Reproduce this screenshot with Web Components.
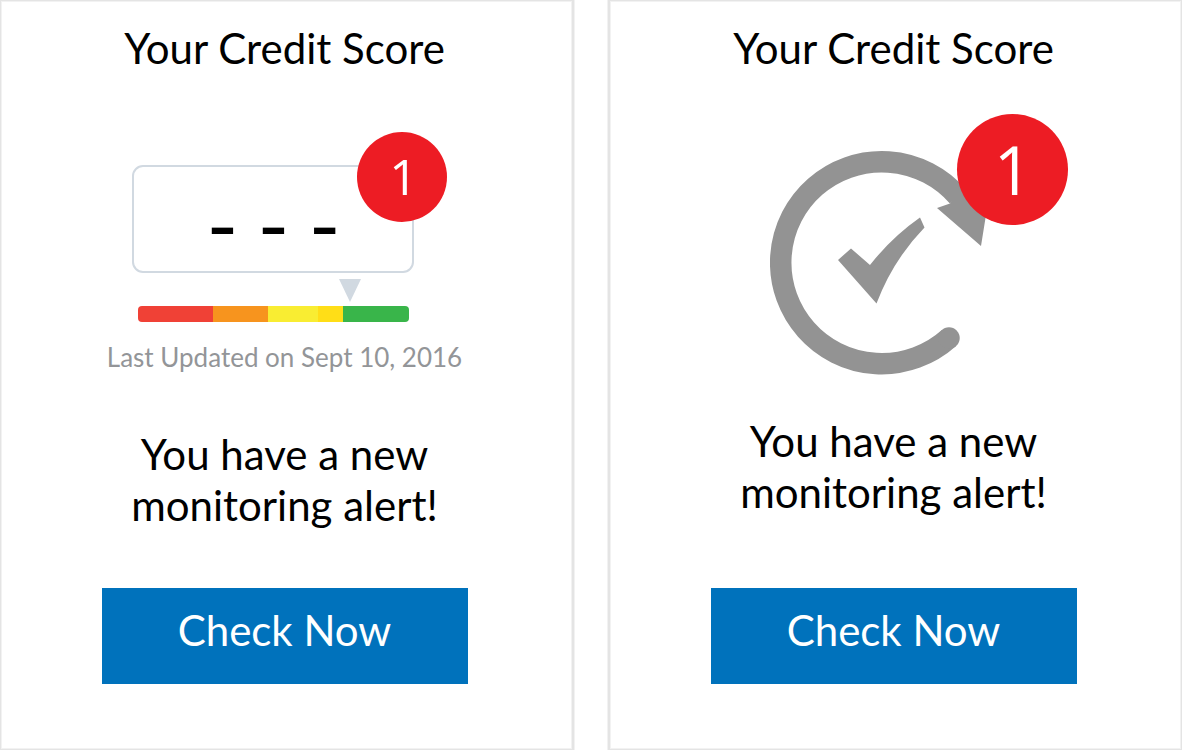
<!DOCTYPE html>
<html lang="en">
<head>
<meta charset="utf-8">
<title>Your Credit Score</title>
<style>
body { margin: 0; background: #fff; color: #000; font-family: Lato, "Open Sans", sans-serif; }
</style>
</head>
<body>
<alert-board>
  <alert-card>
    <span slot="title">Your Credit Score</span>
    <score-gauge slot="figure"><alert-badge slot="badge">1</alert-badge>Last Updated on Sept 10, 2016</score-gauge>
    You have a new<br>monitoring alert!
    <span slot="action">Check Now</span>
  </alert-card>
  <alert-card>
    <span slot="title">Your Credit Score</span>
    <refresh-check slot="figure"><alert-badge size="large">1</alert-badge></refresh-check>
    You have a new<br>monitoring alert!
    <span slot="action">Check Now</span>
  </alert-card>
</alert-board>
<script>
const define = (name, html) => {
  const template = document.createElement('template');
  template.innerHTML = html;
  customElements.define(name, class extends HTMLElement {
    constructor() {
      super();
      this.attachShadow({ mode: 'open' }).append(template.content.cloneNode(true));
    }
  });
};

define('alert-board', `
<style>
:host { display: block; }
main { display: grid; grid-template-columns: 1fr 1fr; gap: 34px; min-height: 100vh; }
::slotted(alert-card:first-child) { border-right-width: 2px; }
::slotted(alert-card:last-child) { border-left-width: 2px; }
</style>
<main><slot></slot></main>`);

define('alert-card', `
<style>
:host {
  display: flex; flex-direction: column; align-items: center; box-sizing: border-box;
  border: 1px solid #e4e4e4; box-shadow: 0 0 0 1px #f2f2f2, inset 0 0 0 1px #f2f2f2;
  padding: 22px 4px 65px 0; text-align: center;
}
h2 { margin: 0; font-size: 42px; line-height: 50px; font-weight: 400; }
p { margin: 40px 0 36px; font-size: 42px; line-height: 51px; }
button {
  margin: auto 0 0; width: 366px; max-width: 90%; height: 96px; padding: 0 0 12px; border: 0;
  background: #0072bc; color: #fff; font: 400 42px/50px Lato, "Open Sans", sans-serif; cursor: pointer;
}
</style>
<h2><slot name="title"></slot></h2>
<slot name="figure"></slot>
<p><slot></slot></p>
<button type="button"><slot name="action"></slot></button>`);

define('alert-badge', `
<style>
:host {
  display: flex; align-items: center; justify-content: center; box-sizing: border-box; width: 90px; height: 90px;
  padding: 0 0 2px 2px; border-radius: 50%; background: #ed1c24; color: #fff;
  font: 500 50px/60px "Open Sans", sans-serif;
}
:host([size=large]) { width: 111px; height: 111px; font-size: 67px; line-height: 80px; }
</style>
<slot></slot>`);

define('score-gauge', `
<style>
:host { display: block; margin: 92px 0 16px; }
.meter { position: relative; width: 304px; margin: 0 auto; }
.score {
  box-sizing: border-box; width: 282px; height: 108px; border: 2px solid #d1d9e1; border-radius: 11px;
  font: 400 88px/106px "Open Sans", sans-serif; text-align: center; white-space: nowrap;
}
.badge { position: absolute; top: -33px; right: -11px; }
.pointer { display: block; margin: 6px 0 4px 207px; }
.bar { display: grid; grid-template-columns: 75fr 55fr 50fr 25fr 66fr; width: 271px; height: 16px; margin-left: 6px; border-radius: 4px; overflow: hidden; }
.poor { background: #f04136; }
.fair { background: #f7941e; }
.good { background: #f9ed32; }
.better { background: #ffde17; }
.best { background: #39b54a; }
.updated { margin-top: 20px; font-size: 26px; line-height: 31px; color: #939598; }
</style>
<div class="meter">
  <div class="score">- - -</div>
  <div class="badge"><slot name="badge"></slot></div>
  <svg class="pointer" width="22" height="23" viewBox="0 0 22 23" aria-hidden="true"><path d="M0 0H22L11 23Z" fill="#d1d9e1"/></svg>
  <div class="bar"><i class="poor"></i><i class="fair"></i><i class="good"></i><i class="better"></i><i class="best"></i></div>
</div>
<div class="updated"><slot></slot></div>`);

define('refresh-check', `
<style>
:host { display: block; position: relative; width: 248px; margin-top: 77px; }
svg { display: block; }
.badge { position: absolute; top: -36px; right: -50px; }
</style>
<svg width="224" height="226" viewBox="0 0 224 226" fill="#939393" aria-hidden="true">
  <path d="M179 188A101 101 0 1 1 188 46.5" fill="none" stroke="#939393" stroke-width="21.5"/>
  <circle cx="179" cy="188" r="10.75"/>
  <path d="M167 58L180 53.5L190 40L219 36L215.500 68L211 96Z"/>
  <path d="M68 110L81 98.500L100 115Q122 87 150 67.500L154.500 77.500Q123 110 106.500 153.500Z"/>
</svg>
<div class="badge"><slot></slot></div>`);
</script>
</body>
</html>
